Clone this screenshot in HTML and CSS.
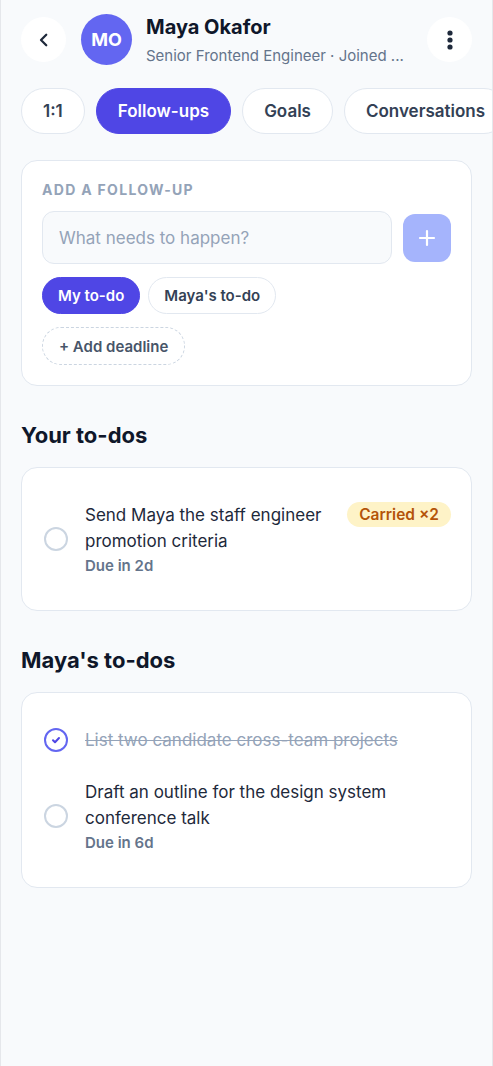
FILE: index.html
```html
<!DOCTYPE html>
<html lang="en">
<head>
    <meta charset="UTF-8">
    <meta name="viewport" content="width=device-width, initial-scale=1.0">
    <title>Maya Okafor · Follow-ups</title>
    <link rel="stylesheet" href="styles.css">
</head>
<body>
    <div class="page">
        <header class="top-bar">
            <button class="round-btn" aria-label="Back">
                <svg width="18" height="18" viewBox="0 0 24 24" fill="none" stroke="#1e293b" stroke-width="3" stroke-linecap="round" stroke-linejoin="round"><path d="M15 5l-7 7 7 7"/></svg>
            </button>
            <div class="avatar">MO</div>
            <div class="person">
                <h1>Maya Okafor</h1>
                <p>Senior Frontend Engineer · Joined ...</p>
            </div>
            <button class="round-btn" aria-label="More">
                <svg width="6" height="22" viewBox="0 0 6 22" fill="#1e293b"><circle cx="3" cy="4" r="2.6"/><circle cx="3" cy="11" r="2.6"/><circle cx="3" cy="18" r="2.6"/></svg>
            </button>
        </header>

        <nav class="tabs">
            <a href="#" class="tab">1:1</a>
            <a href="#" class="tab active">Follow-ups</a>
            <a href="#" class="tab">Goals</a>
            <a href="#" class="tab">Conversations</a>
        </nav>

        <section class="card add-card">
            <div class="label">ADD A FOLLOW-UP</div>
            <div class="input-row">
                <input type="text" class="task-input" placeholder="What needs to happen?">
                <button class="add-btn" aria-label="Add">
                    <svg width="20" height="20" viewBox="0 0 20 20" stroke="#fff" stroke-width="2.2" stroke-linecap="round"><path d="M10 3v14M3 10h14"/></svg>
                </button>
            </div>
            <div class="chips">
                <button class="chip selected">My to-do</button>
                <button class="chip">Maya's to-do</button>
            </div>
            <button class="chip dashed">+ Add deadline</button>
        </section>

        <h2>Your to-dos</h2>
        <section class="card list">
            <div class="todo">
                <span class="check"></span>
                <div class="todo-body">
                    <div class="todo-text">Send Maya the staff engineer promotion criteria</div>
                    <div class="due">Due in 2d</div>
                </div>
                <span class="badge">Carried ×2</span>
            </div>
        </section>

        <h2>Maya's to-dos</h2>
        <section class="card list">
            <div class="todo">
                <span class="check done">
                    <svg width="12" height="12" viewBox="0 0 12 12" fill="none" stroke="#4f46e5" stroke-width="2" stroke-linecap="round" stroke-linejoin="round"><path d="M3 6.3l2 2 4-4.3"/></svg>
                </span>
                <div class="todo-body">
                    <div class="todo-text struck">List two candidate cross-team projects</div>
                </div>
            </div>
            <div class="todo">
                <span class="check"></span>
                <div class="todo-body">
                    <div class="todo-text">Draft an outline for the design system conference talk</div>
                    <div class="due">Due in 6d</div>
                </div>
            </div>
        </section>
    </div>
</body>
</html>
```

FILE: styles.css
```css
* {
    box-sizing: border-box;
}

body {
    margin: 0;
    background: #f8fafc;
    font-family: Inter, "Noto Sans", sans-serif;
    color: #0f172a;
}

.page {
    min-height: 100vh;
    padding: 13px 20px 40px;
    border-left: 1px solid #e5e7eb;
    border-right: 1px solid #e5e7eb;
    overflow: hidden;
}

button {
    font-family: inherit;
    cursor: pointer;
}

/* header */
.top-bar {
    display: flex;
    align-items: center;
}

.round-btn {
    width: 45px;
    height: 45px;
    border-radius: 50%;
    border: none;
    background: #fff;
    display: flex;
    align-items: center;
    justify-content: center;
    padding: 0;
    flex-shrink: 0;
}

.avatar {
    width: 51px;
    height: 51px;
    border-radius: 50%;
    background: #6366f1;
    color: #fff;
    font-weight: 700;
    font-size: 18px;
    display: flex;
    align-items: center;
    justify-content: center;
    margin-left: 15px;
    flex-shrink: 0;
}

.person {
    flex: 1;
    min-width: 0;
    margin: 0 22px 0 14px;
}

.person h1 {
    margin: 0;
    font-size: 20px;
    line-height: 28px;
    font-weight: 700;
}

.person p {
    margin: 5px 0 0;
    font-size: 15px;
    line-height: 20px;
    color: #64748b;
    white-space: nowrap;
}

/* tabs */
.tabs {
    display: flex;
    gap: 11px;
    margin: 22px -20px 0 0;
    white-space: nowrap;
}

.tab {
    display: flex;
    align-items: center;
    height: 46px;
    padding: 0 21px;
    border-radius: 23px;
    border: 1px solid #e2e8f0;
    background: #fff;
    color: #334155;
    text-decoration: none;
    font-size: 17px;
    font-weight: 600;
    flex-shrink: 0;
}

.tab.active {
    background: #4f46e5;
    border-color: #4f46e5;
    color: #fff;
}

/* cards */
.card {
    background: #fff;
    border: 1px solid #e2e8f0;
    border-radius: 16px;
}

.add-card {
    margin-top: 26px;
    padding: 20px;
}

.label {
    font-size: 14px;
    line-height: 18px;
    font-weight: 700;
    letter-spacing: 1.3px;
    color: #94a3b8;
}

.input-row {
    display: flex;
    align-items: center;
    gap: 11px;
    margin-top: 12px;
}

.task-input {
    flex: 1;
    min-width: 0;
    height: 53px;
    padding: 0 16px;
    border: 1px solid #e2e8f0;
    border-radius: 12px;
    background: #f8fafc;
    font-family: inherit;
    font-size: 17px;
    color: #0f172a;
}

.task-input::placeholder {
    color: #94a3b8;
}

.add-btn {
    width: 48px;
    height: 48px;
    border: none;
    border-radius: 12px;
    background: #a5b4fc;
    display: flex;
    align-items: center;
    justify-content: center;
    padding: 0;
}

.chips {
    display: flex;
    gap: 8px;
    margin-top: 13px;
}

.chip {
    height: 37px;
    padding: 0 15px;
    border-radius: 19px;
    border: 1px solid #e2e8f0;
    background: #fff;
    color: #334155;
    font-size: 15px;
    font-weight: 600;
}

.chip.selected {
    background: #4f46e5;
    border-color: #4f46e5;
    color: #fff;
}

.chip.dashed {
    height: 38px;
    margin-top: 13px;
    border: 1px dashed #cbd5e1;
    color: #475569;
    padding: 0 16px;
}

h2 {
    margin: 35px 0 18px;
    font-size: 22px;
    line-height: 28px;
    font-weight: 700;
}

/* to-do lists */
.list {
    padding: 34px 20px 34px 22px;
    display: flex;
    flex-direction: column;
    gap: 26px;
}

.todo {
    display: flex;
    align-items: center;
}

.check {
    width: 24px;
    height: 24px;
    border-radius: 50%;
    border: 2px solid #cbd5e1;
    flex-shrink: 0;
    display: flex;
    align-items: center;
    justify-content: center;
}

.check.done {
    border-color: #6366f1;
}

.todo-body {
    flex: 1;
    min-width: 0;
    margin-left: 17px;
}

.todo-text {
    font-size: 17px;
    line-height: 26px;
    color: #1e293b;
}

.todo-text.struck {
    color: #94a3b8;
    text-decoration: line-through;
}

.due {
    margin-top: 2px;
    font-size: 15px;
    line-height: 20px;
    font-weight: 600;
    color: #64748b;
}

.badge {
    align-self: flex-start;
    margin-left: 16px;
    height: 25px;
    padding: 0 12px;
    border-radius: 13px;
    background: #fef3c7;
    color: #b45309;
    font-size: 15.5px;
    font-weight: 600;
    line-height: 25px;
    white-space: nowrap;
}
```
